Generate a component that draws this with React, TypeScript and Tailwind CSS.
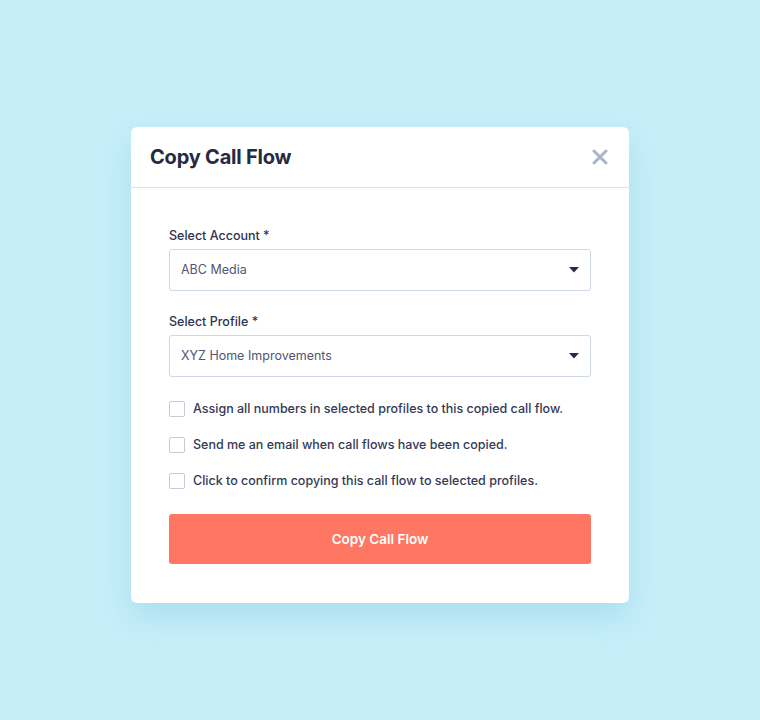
const Caret = () => (
  <svg width="10" height="6" viewBox="0 0 10 6" className="absolute right-[11px] top-1/2 -translate-y-1/2">
    <path d="M0 0h10L5 5.5z" fill="#262b45" />
  </svg>
);

const SelectBox = ({ label, value }: { label: string; value: string }) => (
  <div>
    <div className="text-[12.5px] font-medium text-[#2e3350] leading-4 mb-[5px]">{label}</div>
    <div className="relative h-[42px] rounded-[3px] border border-[#cfd9e3] flex items-center pl-[11px]">
      <span className="text-[12.5px] text-[#505672]">{value}</span>
      <Caret />
    </div>
  </div>
);

const Check = ({ text }: { text: string }) => (
  <label className="flex items-center gap-[8px] h-[20px]">
    <span className="w-[16px] h-[16px] border border-[#c3ccd8] rounded-[2px] bg-white" />
    <span className="text-[12.5px] font-medium text-[#343954]">{text}</span>
  </label>
);

export default function App() {
  return (
    <div
      className="w-[760px] h-[720px] bg-[#c6eef9] flex items-start justify-center pt-[127px]"
      style={{ fontFamily: "Inter, 'Noto Sans', sans-serif" }}
    >
      <div className="w-[498px] bg-white rounded-[6px] shadow-[0_14px_30px_rgba(110,190,220,0.3)]">
        <div className="h-[61px] border-b border-[#dbe3ea] flex items-center justify-between pl-[19px] pr-[21px]">
          <h2 className="text-[20px] font-bold text-[#262b40] tracking-[-0.2px]">Copy Call Flow</h2>
          <button className="p-0">
            <svg width="16" height="16" viewBox="0 0 16 16">
              <path d="M2 2l12 12M14 2L2 14" stroke="#aab4c6" strokeWidth="3" strokeLinecap="round" />
            </svg>
          </button>
        </div>
        <div className="px-[38px] pt-[40px] pb-[39px]">
          <SelectBox label="Select Account *" value="ABC Media" />
          <div className="mt-[23px]">
            <SelectBox label="Select Profile *" value="XYZ Home Improvements" />
          </div>
          <div className="mt-[22px] flex flex-col gap-[16px]">
            <Check text="Assign all numbers in selected profiles to this copied call flow." />
            <Check text="Send me an email when call flows have been copied." />
            <Check text="Click to confirm copying this call flow to selected profiles." />
          </div>
          <button className="mt-[23px] w-full h-[50px] rounded-[3px] bg-[#ff7763] text-white text-[13.5px] font-semibold">
            Copy Call Flow
          </button>
        </div>
      </div>
    </div>
  );
}
